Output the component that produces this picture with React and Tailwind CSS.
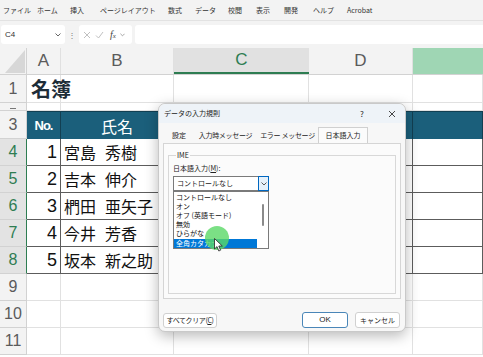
export default function App() {
  const menu = [
    ["ファイル", "w-[34px]"],
    ["ホーム", "w-[33px]"],
    ["挿入", "w-[30px]"],
    ["ページレイアウト", "w-[68px]"],
    ["数式", "w-[27px]"],
    ["データ", "w-[33px]"],
    ["校閲", "w-[28px]"],
    ["表示", "w-[28px]"],
    ["開発", "w-[29px]"],
    ["ヘルプ", "w-[34px]"],
    ["Acrobat", "w-[40px]"],
  ];
  const colW = ["w-[34px]", "w-[113px]", "w-[135px]", "w-[104px]", "w-[70px]"];
  const rows = [
    { n: "1", h: "h-[28px]", t: "title" },
    { n: "", h: "h-[8px]", t: "tiny" },
    { n: "3", h: "h-[28px]", t: "head" },
    { n: "4", h: "h-[27px]", t: "data", no: "1", last: "宮島", first: "秀樹" },
    { n: "5", h: "h-[27px]", t: "data", no: "2", last: "吉本", first: "伸介" },
    { n: "6", h: "h-[27px]", t: "data", no: "3", last: "椚田", first: "亜矢子" },
    { n: "7", h: "h-[27px]", t: "data", no: "4", last: "今井", first: "芳香" },
    { n: "8", h: "h-[27px]", t: "data", no: "5", last: "坂本", first: "新之助" },
    { n: "9", h: "h-[27px]", t: "norm" },
    { n: "10", h: "h-[27px]", t: "norm" },
    { n: "11", h: "h-[27px]", t: "norm" },
  ];
  const items = ["コントロールなし", "オン", "オフ (英語モード)", "無効", "ひらがな", "全角カタカナ"];

  return (
    <div className="relative w-[483px] h-[357px] overflow-hidden bg-white font-['Noto_Sans_CJK_JP','Liberation_Sans',sans-serif]">
      {/* menu */}
      <div className="flex h-[21px] items-center bg-[#f3f3f3] border-b border-[#e2e2e2] pl-[3px] text-[7px] text-[#333]">
        {menu.map(([m, w]) => (
          <div key={m} className={`${w} whitespace-nowrap`}>{m}</div>
        ))}
      </div>
      {/* formula bar */}
      <div className="flex h-[27px] items-center bg-[#f3f3f3] pl-[1px]">
        <div className="flex h-[19px] w-[64px] items-center justify-between rounded-[3px] bg-white pl-[4px] pr-[4px] text-[8px] text-[#333] font-['Liberation_Sans',sans-serif]">
          <span>C4</span>
          <svg width="6" height="4" viewBox="0 0 6 4"><polyline points="0.5,0.5 3,3 5.5,0.5" fill="none" stroke="#555" strokeWidth="0.9" /></svg>
        </div>
        <div className="flex w-[14px] justify-center text-[8px] text-[#777]">⋮</div>
        <div className="flex h-[19px] w-[53px] items-center rounded-[3px] bg-white pl-[4px] gap-[4px]">
          <svg width="8" height="8" viewBox="0 0 8 8"><path d="M1 1L7 7M7 1L1 7" stroke="#b9b9b9" strokeWidth="0.9" /></svg>
          <svg width="9" height="8" viewBox="0 0 9 8"><path d="M1 4.5L3.5 7L8 1" fill="none" stroke="#b9b9b9" strokeWidth="0.9" /></svg>
          <span className="font-['Liberation_Serif',serif] italic text-[10px] text-[#444] leading-none ml-[2px]">f<span className="text-[7px]">x</span></span>
          <svg width="5" height="4" viewBox="0 0 6 4"><polyline points="0.5,0.5 3,3 5.5,0.5" fill="none" stroke="#888" strokeWidth="0.9" /></svg>
        </div>
        <div className="ml-[3px] h-[19px] flex-1 rounded-l-[3px] bg-white" />
      </div>
      {/* column headers */}
      <div className="flex h-[27px] bg-[#f3f3f3] border-b border-[#d2d2d2] text-[17px] text-[#5b5b5b] font-['Liberation_Sans',sans-serif]">
        <div className="relative w-[27px] border-r border-[#d2d2d2]">
          <svg className="absolute left-[5px] top-[2px]" width="20" height="23" viewBox="0 0 20 23"><polygon points="20,0 20,23 0,23" fill="#d7d7d7" /></svg>
        </div>
        <div className="flex w-[34px] items-center justify-center border-r border-[#e0e0e0]">A</div>
        <div className="flex w-[113px] items-center justify-center border-r border-[#e0e0e0]">B</div>
        <div className="flex w-[135px] items-center justify-center bg-[#e1e1e1] border-b-2 border-[#2e7d52] text-[#2e7d52]">C</div>
        <div className="flex w-[104px] items-center justify-center border-r border-[#e0e0e0]">D</div>
        <div className="w-[70px] bg-[#9fd6b4]" />
      </div>
      {/* rows */}
      {rows.map((r, i) => {
        const sel = r.t === "data";
        return (
          <div key={i} className={`flex ${r.h}`}>
            <div
              className={`flex w-[27px] items-center justify-center overflow-hidden border-b text-[16px] font-['Liberation_Sans',sans-serif] ${
                sel
                  ? "bg-[#e3e3e3] text-[#2e7d52] border-r border-r-[#2e7d52] border-b-[#d2d2d2]"
                  : "bg-[#f3f3f3] text-[#5b5b5b] border-r border-[#d2d2d2]"
              }`}
            >
              {r.t === "tiny" ? <div className="h-[1px] w-[6px] bg-[#777] mt-[4px]" /> : r.n}
            </div>
            {colW.map((w, c) => {
              if (r.t === "head") {
                return (
                  <div key={c} className={`${w} flex items-center justify-center bg-[#1b5f7b] border-r border-t border-[#123f52] text-white`}>
                    {c === 0 && <span className="text-[13px] font-semibold tracking-[-1px] font-['Liberation_Sans',sans-serif]">No.</span>}
                    {c === 1 && <span className="text-[16px]">氏名</span>}
                  </div>
                );
              }
              if (r.t === "data") {
                return (
                  <div key={c} className={`${w} flex items-center border-r border-b border-[#5c5c5c] bg-white text-[#111]`}>
                    {c === 0 && <span className="ml-auto pr-[3px] text-[18px] font-['Liberation_Sans',sans-serif]">{r.no}</span>}
                    {c === 1 && (
                      <span className="flex gap-[9px] pl-[3px] text-[16px] whitespace-nowrap">
                        <span>{r.last}</span>
                        <span>{r.first}</span>
                      </span>
                    )}
                  </div>
                );
              }
              return (
                <div key={c} className={`${w} flex items-center border-r border-b border-[#e1e1e1] bg-white`}>
                  {r.t === "title" && c === 0 && (
                    <span className="relative z-10 pl-[4px] text-[20px] font-bold text-[#1d2d38] whitespace-nowrap">名簿</span>
                  )}
                </div>
              );
            })}
          </div>
        );
      })}

      {/* dialog */}
      <div className="absolute left-[158px] top-[103px] flex h-[229px] w-[248px] flex-col rounded-[7px] border border-[#c9c9c9] bg-[#f7f7f7] px-[4px] shadow-[0_4px_14px_rgba(0,0,0,0.28)] text-[#222]">
        <div className="-mx-[4px] flex h-[19px] items-center rounded-t-[7px] bg-[#eef3f8] pl-[5px] text-[7px]">
          <span className="flex-1 whitespace-nowrap">データの入力規則</span>
          <span className="w-[28px] text-[8px]">?</span>
          <svg className="mr-[9px]" width="8" height="8" viewBox="0 0 8 8"><path d="M1 1L7 7M7 1L1 7" stroke="#333" strokeWidth="0.9" /></svg>
        </div>
        <div className="flex h-[20px] items-end pl-[1px] text-[7px] whitespace-nowrap">
          <div className="flex h-[16px] w-[30px] items-center justify-center">設定</div>
          <div className="flex h-[16px] w-[63px] items-center justify-center tracking-[-0.3px]">入力時メッセージ</div>
          <div className="flex h-[16px] w-[61px] items-center justify-center tracking-[-0.3px]">エラー メッセージ</div>
          <div className="flex h-[16px] w-[50px] items-center justify-center border border-b-0 border-[#d0d0d0] bg-[#fbfbfb]">日本語入力</div>
        </div>
        <div className="flex h-[156px] flex-col border border-[#d5d5d5] bg-[#fbfbfb] px-[4px] pt-[7px] pb-[4px]">
          <fieldset className="flex-1 border border-[#d8d8d8] pl-[4px]">
            <legend className="ml-[3px] px-[1px] text-[7px] leading-[9px]">IME</legend>
            <div className="mt-[3px] text-[7px] leading-[10px]">
              日本語入力(<span className="underline">M</span>):
            </div>
            <div className="relative mt-[3px] flex h-[15px] w-[96px] items-center border border-[#7a7a7a] bg-white">
              <span className="flex-1 pl-[3px] text-[7px] leading-none whitespace-nowrap">コントロールなし</span>
              <div className="flex h-[15px] w-[11px] -mr-[1px] items-center justify-center border border-[#0067c0] bg-[#e5f1fb]">
                <svg width="6" height="4" viewBox="0 0 6 4"><polyline points="0.5,0.5 3,3 5.5,0.5" fill="none" stroke="#333" strokeWidth="0.8" /></svg>
              </div>
              <div className="absolute left-[-1px] top-[14px] z-10 flex h-[58px] w-[96px] border border-[#7a7a7a] bg-white pt-[1px]">
                <div className="flex flex-1 flex-col">
                  {items.map((it, k) => (
                    <div
                      key={it}
                      className={`h-[9px] overflow-hidden pl-[2px] text-[7px] leading-[9px] whitespace-nowrap ${
                        k === 5 ? "bg-[#0078d7] text-white mt-[1px]" : "text-[#111]"
                      }`}
                    >
                      {it}
                    </div>
                  ))}
                </div>
                <div className="flex w-[11px] justify-center">
                  <div className="mt-[11px] h-[22px] w-[2px] rounded-full bg-[#8a8a8a]" />
                </div>
              </div>
            </div>
          </fieldset>
        </div>
        <div className="mt-[13px] flex h-[16px] items-center text-[7px] whitespace-nowrap">
          <div className="flex h-[15px] w-[54px] items-center justify-center rounded-[3px] border border-[#d0d0d0] bg-white tracking-[-0.4px]">
            すべてクリア(<span className="underline">C</span>)
          </div>
          <div className="ml-auto flex h-[16px] w-[46px] items-center justify-center rounded-[3px] border-[1.5px] border-[#4a86b8] bg-white font-['Liberation_Sans',sans-serif] text-[8px]">
            OK
          </div>
          <div className="ml-[7px] mr-[1px] flex h-[16px] w-[45px] items-center justify-center rounded-[3px] border border-[#d0d0d0] bg-white">
            キャンセル
          </div>
        </div>
      </div>

      {/* cursor highlight */}
      <div className="absolute left-[205px] top-[226px] z-20 h-[24px] w-[24px] rounded-full bg-[#5ad866]/80" />
      <svg className="absolute left-[214px] top-[238px] z-30" width="9" height="14" viewBox="0 0 9 14">
        <path d="M0.5 0.5L0.5 11L3 8.6L4.8 13L6.6 12.2L4.8 8H8.3Z" fill="white" stroke="#222" strokeWidth="0.8" />
      </svg>
    </div>
  );
}
